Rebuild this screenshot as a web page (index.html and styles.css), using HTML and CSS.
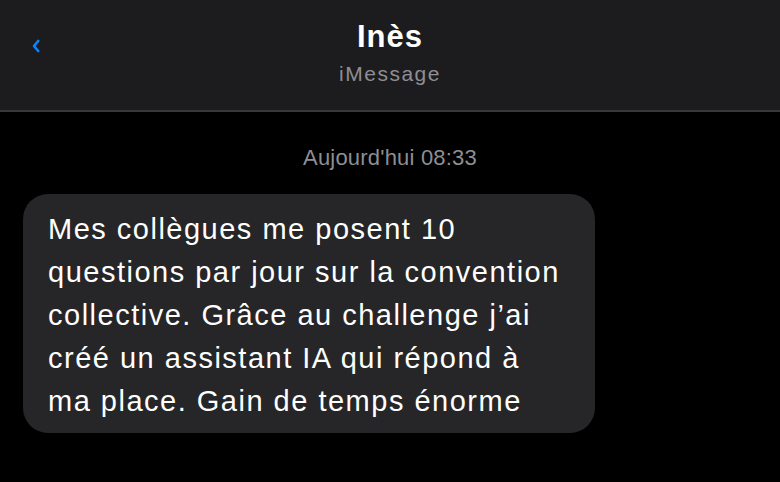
FILE: index.html
```html
<!DOCTYPE html>
<html lang="fr">
<head>
    <meta charset="UTF-8">
    <meta name="viewport" content="width=device-width, initial-scale=1.0">
    <title>Inès - iMessage</title>
    <link rel="stylesheet" href="styles.css">
</head>
<body>
    <header class="top-bar">
        <a class="back" href="#">
            <svg width="8" height="14" viewBox="0 0 8 14">
                <path d="M6.2 2 L2 7 L6.2 12" fill="none" stroke="#0a84ff" stroke-width="2.6" stroke-linecap="round" stroke-linejoin="round"/>
            </svg>
        </a>
        <div class="contact">
            <div class="name">Inès</div>
            <div class="service">iMessage</div>
        </div>
    </header>

    <main class="thread">
        <div class="timestamp">Aujourd'hui 08:33</div>

        <div class="bubble">
            Mes collègues me posent 10<br>
            questions par jour sur la convention<br>
            collective. Grâce au challenge j’ai<br>
            créé un assistant IA qui répond à<br>
            ma place. Gain de temps énorme
        </div>
    </main>
</body>
</html>
```

FILE: styles.css
```css
html, body {
    margin: 0;
    padding: 0;
    background-color: #000;
    font-family: 'Liberation Sans', Arial, sans-serif;
    color: #fff;
}

.top-bar {
    position: relative;
    height: 110px;
    background-color: #1c1c1e;
    border-bottom: 2px solid #38383a;
    display: flex;
    justify-content: center;
    align-items: flex-start;
}

.back {
    position: absolute;
    left: 32px;
    top: 39px;
    display: block;
    line-height: 0;
}

.contact {
    text-align: center;
    padding-top: 19px;
}

.name {
    font-size: 31px;
    font-weight: bold;
    line-height: 36px;
    letter-spacing: 1px;
}

.service {
    font-size: 21px;
    color: #8e8e93;
    line-height: 26px;
    margin-top: 6px;
    letter-spacing: 1.5px;
}

.thread {
    padding: 33px 23px 0;
}

.timestamp {
    text-align: center;
    font-size: 22px;
    color: #8e8e93;
    line-height: 26px;
    letter-spacing: 0.2px;
}

.bubble {
    display: inline-block;
    margin-top: 23px;
    background-color: #262628;
    border-radius: 25px;
    padding: 14px 35px 10px 25px;
    font-size: 29px;
    line-height: 43px;
    letter-spacing: 1.5px;
    white-space: nowrap;
}
```
